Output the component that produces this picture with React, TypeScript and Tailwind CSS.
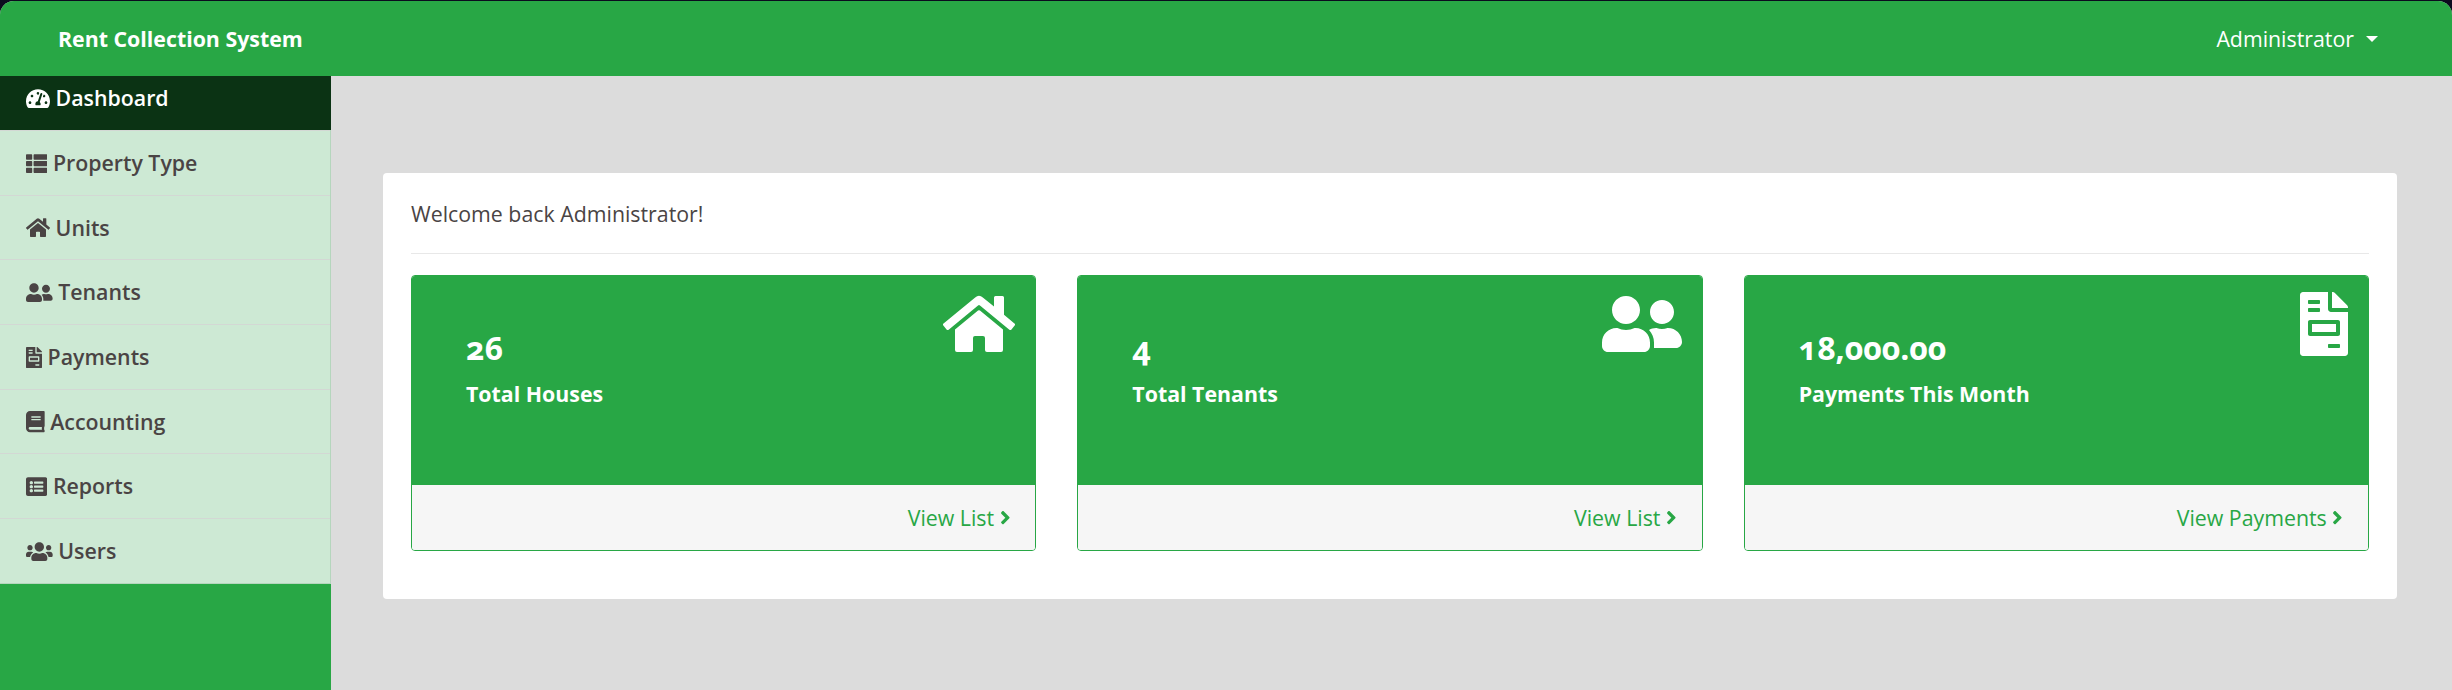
import { FaTachometerAlt, FaThList, FaHome, FaUserFriends, FaFileInvoice, FaBook, FaListAlt, FaUsers, FaAngleRight } from "react-icons/fa";
import type { IconType } from "react-icons";

const nav: { label: string; Icon: IconType; w: string }[] = [
  { label: "Property Type", Icon: FaThList, w: "w-[21.33px]" },
  { label: "Units", Icon: FaHome, w: "w-[24px]" },
  { label: "Tenants", Icon: FaUserFriends, w: "w-[26.67px]" },
  { label: "Payments", Icon: FaFileInvoice, w: "w-[16px]" },
  { label: "Accounting", Icon: FaBook, w: "w-[18.67px]" },
  { label: "Reports", Icon: FaListAlt, w: "w-[21.33px]" },
  { label: "Users", Icon: FaUsers, w: "w-[26.67px]" },
];

const cards: { value: string; label: string; link: string; Icon: IconType; w: string }[] = [
  { value: "26", label: "Total Houses", link: "View List", Icon: FaHome, w: "w-[72px]" },
  { value: "4", label: "Total Tenants", link: "View List", Icon: FaUserFriends, w: "w-[80px]" },
  { value: "18,000.00", label: "Payments This Month", link: "View Payments", Icon: FaFileInvoice, w: "w-[48px]" },
];

export default function App() {
  return (
    <div className="h-[690px] w-[2452px] overflow-hidden bg-[#0b0b1e] pt-px font-['Open_Sans',sans-serif] text-[21.33px]">
      <div className="flex h-[689px] flex-col overflow-hidden rounded-t-[14px] bg-[#dcdcdc]">
        <header className="flex h-[75px] shrink-0 items-center justify-between bg-[#28a745] pl-[58px] pr-[74px] text-white">
          <span className="font-bold">Rent Collection System</span>
          <span className="flex items-center">
            Administrator
            <span className="ml-[12px] mt-px h-0 w-0 border-x-[6px] border-t-[6px] border-x-transparent border-t-white" />
          </span>
        </header>
        <div className="flex min-h-0 flex-1">
          <aside className="w-[331px] shrink-0 bg-[#28a745]">
            <div className="flex h-[54px] items-start bg-[#0b3314] pl-[26px] pt-[6px] font-semibold text-white">
              <span className="whitespace-pre">
                <FaTachometerAlt className="inline-block h-[21.33px] w-[24px] align-[-3px]" /> Dashboard
              </span>
            </div>
            <div className="border-r border-[#b5d6bd]">
              {nav.map(({ label, Icon, w }) => (
                <div key={label} className="flex h-[64.7px] items-center border-t border-[#d3d8d4] bg-[#cde9d4] pl-[26px] font-semibold text-[#4a4444]">
                  <span className="whitespace-pre">
                    <Icon className={`inline-block h-[21.33px] align-[-3px] ${w}`} /> {label}
                  </span>
                </div>
              ))}
            </div>
            <div className="h-px bg-[#b5d6bd]" />
          </aside>
          <main className="min-w-0 flex-1 pl-[52px] pr-[55px] pt-[97px]">
            <section className="h-[426px] rounded-[4px] bg-white px-[28px] pt-[27px]">
              <p className="leading-[27px] text-[#4a4444]">Welcome back Administrator!</p>
              <hr className="mt-[26px] border-t border-[#e8e8e8]" />
              <div className="mt-[21px] grid grid-cols-3 gap-[41px]">
                {cards.map(({ value, label, link, Icon, w }) => (
                  <article key={label} className="relative flex h-[276px] flex-col overflow-hidden rounded-[4px] border border-[#28a745]">
                    <div className="h-[209px] bg-[#28a745] pl-[54px] pt-[54px] text-white">
                      <div className="text-[32px] font-bold leading-[36px] oldstyle-nums">{value}</div>
                      <div className="mt-[14px] font-bold leading-[27px]">{label}</div>
                    </div>
                    <Icon className={`absolute right-[20px] top-[16px] h-[64px] text-white ${w}`} />
                    <div className="flex flex-1 items-center justify-end bg-[#f6f6f6] pr-[25px] text-[#28a745]">
                      <span className="whitespace-pre">
                        {link} <FaAngleRight className="inline-block h-[21.33px] w-[10.67px] align-[-3px]" />
                      </span>
                    </div>
                  </article>
                ))}
              </div>
            </section>
          </main>
        </div>
      </div>
    </div>
  );
}
